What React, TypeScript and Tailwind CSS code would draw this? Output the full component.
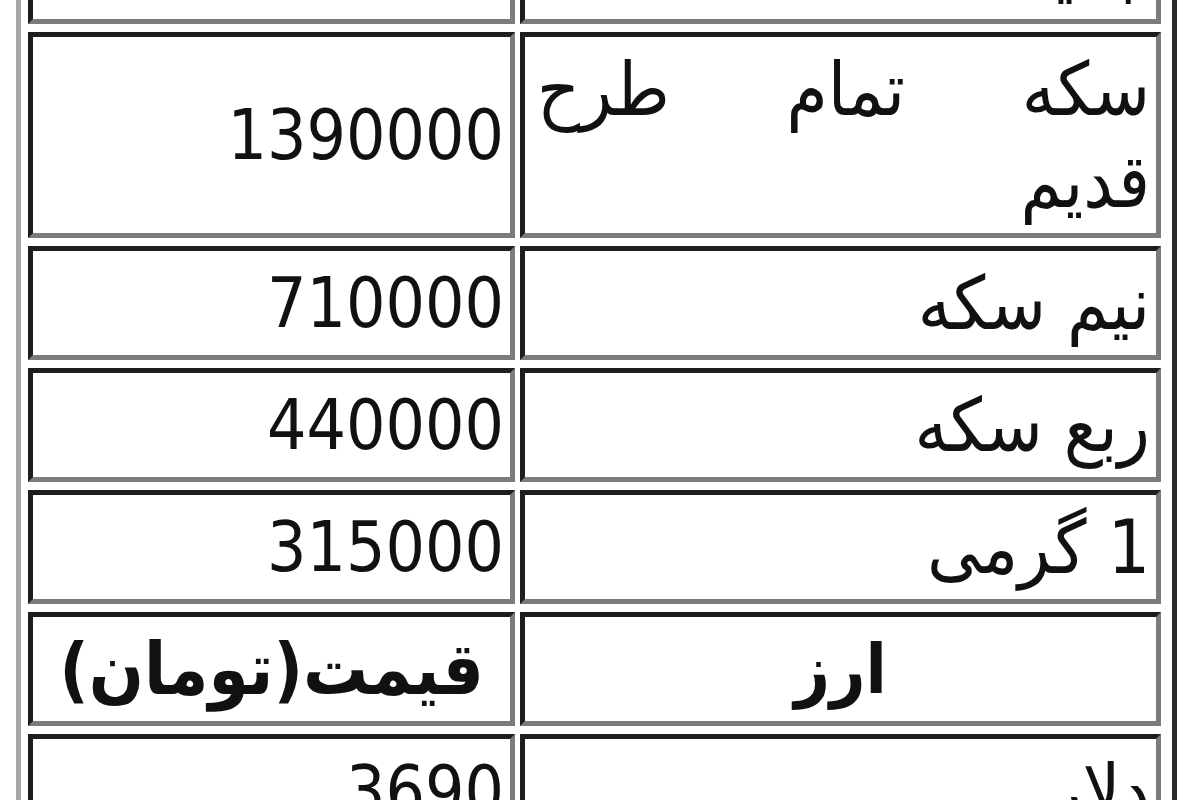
const rows: { name: string[]; price: string; head?: boolean }[] = [
  { name: ["سکه تمام طرح", "جدید"], price: "1400000" },
  { name: ["سکه تمام طرح", "قدیم"], price: "1390000" },
  { name: ["نیم سکه"], price: "710000" },
  { name: ["ربع سکه"], price: "440000" },
  { name: ["1 گرمی"], price: "315000" },
  { name: ["ارز"], price: "قیمت(تومان)", head: true },
  { name: ["دلار"], price: "3690" },
  { name: ["یورو"], price: "4700" },
];

const cell =
  "border-[5px] border-t-[#1e1e1e] border-r-[#7c7c7c] border-b-[#7c7c7c] border-l-[#1e1e1e] px-[6px] py-[6px] flex items-center";

export default function App() {
  return (
    <div className="h-screen overflow-hidden bg-white text-[#111]">
      <div
        dir="rtl"
        className="ml-[16px] -mt-[182px] w-fit border-l-[5px] border-r-[5px] border-l-[#a6a6a6] border-r-[#2a2a2a] pl-[7px] pr-[11px] font-['DejaVu_Sans_Condensed','DejaVu_Sans',sans-serif] text-[69px] leading-[92px]"
      >
        <div className="grid grid-cols-[641px_487px] gap-x-[5px] gap-y-[8px]">
          {rows.map((r) => (
            <div key={r.name.join(" ")} className="contents">
              <div className={cell + (r.head ? " justify-center font-bold" : " justify-start")}>
                {r.name.length > 1 ? (
                  <div className="w-full text-[74px]">
                    <div className="text-justify [text-align-last:justify] pl-[6px]">{r.name[0]}</div>
                    <div>{r.name[1]}</div>
                  </div>
                ) : (
                  <span className={r.head ? "" : "text-[74px]"}>{r.name[0]}</span>
                )}
              </div>
              <div className={cell + (r.head ? " justify-center font-bold text-[72px]" : " justify-start")}>
                <span>{r.price}</span>
              </div>
            </div>
          ))}
        </div>
      </div>
    </div>
  );
}
